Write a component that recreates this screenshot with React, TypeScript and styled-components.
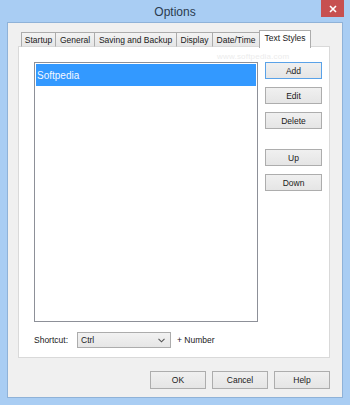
import styled, { createGlobalStyle } from "styled-components";

const GlobalStyle = createGlobalStyle`
  html, body {
    margin: 0;
    padding: 0;
    background: #ffffff;
  }
  body {
    font-family: "Liberation Sans", Arial, sans-serif;
  }
  * {
    box-sizing: border-box;
  }
`;

const tabs = [
  { label: "Startup", width: 35 },
  { label: "General", width: 40 },
  { label: "Saving and Backup", width: 83 },
  { label: "Display", width: 37 },
  { label: "Date/Time", width: 48 },
  { label: "Text Styles", width: 52, active: true },
];

export default function App() {
  return (
    <>
      <GlobalStyle />
      <Frame>
        <TitleBar>
          <Title>Options</Title>
          <CloseButton aria-label="Close">
            <svg width="8" height="8" viewBox="0 0 8 8">
              <path d="M1 1 L7 7 M7 1 L1 7" stroke="#ffffff" strokeWidth="1.6" />
            </svg>
          </CloseButton>
        </TitleBar>
        <Client>
          <TabBar>
            {tabs.map((t) => (
              <Tab key={t.label} $width={t.width} $active={!!t.active}>
                {t.label}
              </Tab>
            ))}
          </TabBar>
          <Panel>
            <Watermark>www.softpedia.com</Watermark>
            <Body>
              <ListBox>
                <ListItem $selected>Softpedia</ListItem>
              </ListBox>
              <SideButtons>
                <Button $default>Add</Button>
                <Button>Edit</Button>
                <Button>Delete</Button>
                <Spacer />
                <Button>Up</Button>
                <Button>Down</Button>
              </SideButtons>
            </Body>
            <ShortcutRow>
              <Label>Shortcut:</Label>
              <Combo>
                <span>Ctrl</span>
                <svg width="7" height="5" viewBox="0 0 7 5">
                  <path d="M0.5 0.8 L3.5 3.8 L6.5 0.8" stroke="#555" strokeWidth="1.1" fill="none" />
                </svg>
              </Combo>
              <Label>+ Number</Label>
            </ShortcutRow>
          </Panel>
          <Footer>
            <Button $wide>OK</Button>
            <Button $wide>Cancel</Button>
            <Button $wide>Help</Button>
          </Footer>
        </Client>
      </Frame>
    </>
  );
}

const Frame = styled.div`
  width: 350px;
  height: 405px;
  background: #a9cdf3;
  display: flex;
  flex-direction: column;
  padding: 0 7px 7px 7px;
`;

const TitleBar = styled.div`
  position: relative;
  height: 22px;
  display: flex;
  align-items: center;
  justify-content: center;
`;

const Title = styled.div`
  font-size: 12px;
  color: #2b3a4f;
  padding-top: 2px;
`;

const CloseButton = styled.div`
  position: absolute;
  top: 0;
  right: -1px;
  width: 23px;
  height: 17px;
  background: #c75050;
  display: flex;
  align-items: center;
  justify-content: center;
`;

const Client = styled.div`
  flex: 1;
  background: #f0f0f0;
  border: 1px solid #8fb2d8;
  display: flex;
  flex-direction: column;
  padding: 6px 12px 0 10px;
`;

const TabBar = styled.div`
  display: flex;
  align-items: flex-end;
  height: 18px;
  padding-left: 4px;
  position: relative;
  z-index: 2;
`;

const Tab = styled.div<{ $width: number; $active: boolean }>`
  width: ${(p) => p.$width}px;
  height: ${(p) => (p.$active ? 18 : 15)}px;
  margin-left: -1px;
  margin-bottom: ${(p) => (p.$active ? -1 : 0)}px;
  border: 1px solid #acacac;
  border-bottom: ${(p) => (p.$active ? "none" : "1px solid #d9d9d9")};
  background: ${(p) =>
    p.$active ? "#ffffff" : "linear-gradient(#f3f3f3, #e6e6e6)"};
  font-size: 8.5px;
  color: #1a1a1a;
  display: flex;
  align-items: center;
  justify-content: center;
  padding-top: ${(p) => (p.$active ? 0 : 1)}px;
  padding-bottom: ${(p) => (p.$active ? 3 : 0)}px;
  white-space: nowrap;
`;

const Panel = styled.div`
  position: relative;
  width: 312px;
  height: 312px;
  margin-top: -1px;
  background: #ffffff;
  border: 1px solid #d9d9d9;
  padding: 15px 6px 0 15px;
  display: flex;
  flex-direction: column;
`;

const Watermark = styled.div`
  position: absolute;
  top: 5px;
  left: 198px;
  font-size: 8px;
  color: #ececec;
  letter-spacing: 0.2px;
`;

const Body = styled.div`
  display: flex;
  gap: 7px;
`;

const ListBox = styled.div`
  width: 224px;
  height: 260px;
  border: 1px solid #8d9098;
  padding: 1px 1px;
  background: #ffffff;
`;

const ListItem = styled.div<{ $selected?: boolean }>`
  height: 22px;
  padding-left: 1px;
  font-size: 10px;
  display: flex;
  align-items: center;
  color: ${(p) => (p.$selected ? "#f4f8ff" : "#000")};
  background: ${(p) => (p.$selected ? "#3399ff" : "transparent")};
`;

const SideButtons = styled.div`
  display: flex;
  flex-direction: column;
  gap: 8px;
`;

const Spacer = styled.div`
  height: 4px;
`;

const Button = styled.div<{ $default?: boolean; $wide?: boolean }>`
  width: ${(p) => (p.$wide ? 56 : 57)}px;
  height: ${(p) => (p.$wide ? 18 : 17)}px;
  border: 1px solid ${(p) => (p.$default ? "#5aa2e8" : "#adadad")};
  background: linear-gradient(#f0f0f0, #e5e5e5);
  font-size: 8.5px;
  color: #1a1a1a;
  display: flex;
  align-items: center;
  justify-content: center;
`;

const ShortcutRow = styled.div`
  display: flex;
  align-items: center;
  margin-top: 10px;
  height: 16px;
`;

const Label = styled.div`
  font-size: 8.5px;
  color: #1a1a1a;
  margin-right: 6px;
  &:first-child {
    width: 43px;
    margin-right: 0;
  }
`;

const Combo = styled.div`
  width: 94px;
  height: 16px;
  border: 1px solid #acacac;
  background: linear-gradient(#f2f2f2, #e6e6e6);
  display: flex;
  align-items: center;
  justify-content: space-between;
  padding: 0 5px 0 3px;
  margin-right: 6px;
  font-size: 8.5px;
  color: #1a1a1a;
`;

const Footer = styled.div`
  display: flex;
  justify-content: flex-end;
  gap: 6px;
  margin-top: 13px;
  padding-right: 0;
`;
